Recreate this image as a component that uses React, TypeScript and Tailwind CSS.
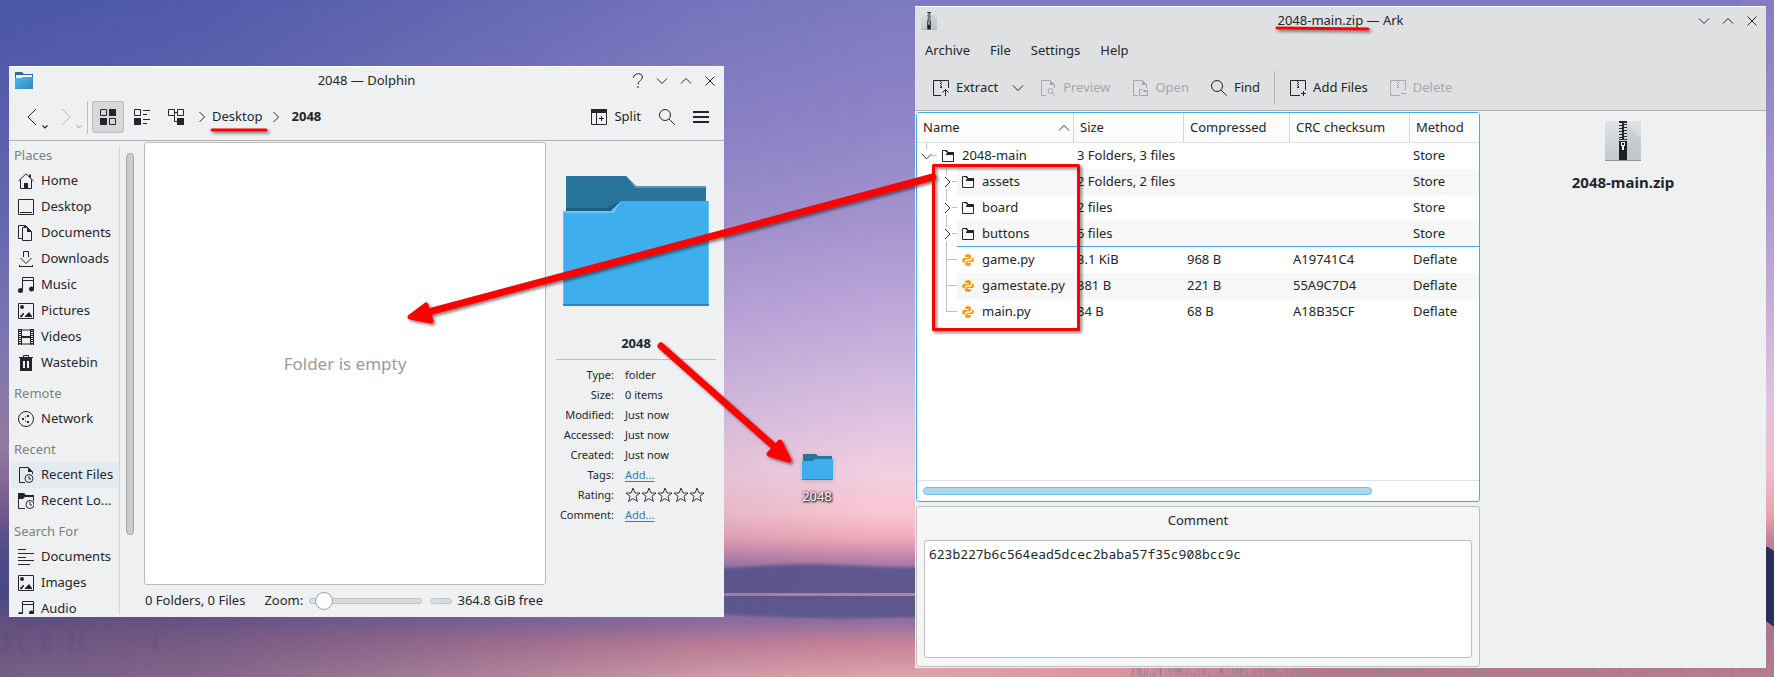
import React from "react";

type IconProps = { className?: string };

function Glyph({ className = "size-4", children }: { className?: string; children: React.ReactNode }) {
  return (
    <svg viewBox="0 0 16 16" className={`shrink-0 ${className}`} fill="none" stroke="currentColor" aria-hidden="true">
      {children}
    </svg>
  );
}

const HomeIcon = () => (
  <Glyph>
    <path d="M.5 8 8 .8 15.500 8M2.500 6.500v9h11v-9" />
    <path d="M6 10h4v5.500H6zM11 1.500h2v4l-2-2z" fill="currentColor" stroke="none" />
  </Glyph>
);
const DesktopIcon = () => (
  <Glyph>
    <path d="M.5.5h15v15H.5zM2 13.500h12" />
  </Glyph>
);
const DocumentsIcon = () => (
  <Glyph>
    <path d="M4 13.500H.5V.5H8M4.500 2.500h5l4 4v9h-9z" />
    <path d="M6 0l4 2H6zM9 2v5h5z" fill="currentColor" stroke="none" />
  </Glyph>
);
const DownloadsIcon = () => (
  <Glyph>
    <path d="M5.500 6V.5h5V6M2.500 7 8 12.500 13.500 7M1 15.500h14" />
    <path d="M1.500 14v2M14.500 14v2" />
  </Glyph>
);
const MusicIcon = () => (
  <Glyph>
    <path d="M4.500 13V.5h11V12M4.500 3.500h11" />
    <circle cx="2.500" cy="13.500" r="2.500" fill="currentColor" stroke="none" />
    <circle cx="13.500" cy="12" r="2.500" fill="currentColor" stroke="none" />
  </Glyph>
);
const PicturesIcon = () => (
  <Glyph>
    <path d="M.5.5h15v15H.5z" />
    <circle cx="4" cy="4" r="2" fill="currentColor" stroke="none" />
    <path d="M2 14v-1l3-3h1v1l-2 3zM7 14v-1l4-4 3 4v1z" fill="currentColor" stroke="none" />
  </Glyph>
);
const VideosIcon = () => (
  <Glyph>
    <path d="M.5 0v16M3.500 0v16M12.500 0v16M15.500 0v16" />
    <path d="M2 0v16M14 0v16" strokeWidth="2" strokeDasharray="1 1" />
    <path d="M0 1h16M0 15h16" strokeWidth="2" opacity=".5" />
    <path d="M4 8h8" strokeWidth="2" />
  </Glyph>
);
const WastebinIcon = () => (
  <Glyph>
    <path d="M1 2h14v1h-1v13H2V3H1zM5 6v7h2V6zM9 6v7h2V6z" fill="currentColor" fillRule="evenodd" stroke="none" />
    <path d="M5.500 2V.5h5V2" />
  </Glyph>
);
const NetworkIcon = () => (
  <Glyph>
    <circle cx="8" cy="8" r="7.500" />
    <path d="M4 7h2v2H4zM9 4h2v2H9zM9 10h2v2H9zM7 5.500h1v1H7zM7 9.500h1v1H7z" fill="currentColor" stroke="none" />
  </Glyph>
);
const RecentFilesIcon = () => (
  <Glyph>
    <path d="M7 15.500H1.500V.5H10l4.500 4.500v2" />
    <path d="M10 0v5h5z" fill="currentColor" stroke="none" />
    <circle cx="11" cy="11.500" r="4" />
    <path d="M11 9v3h2" />
  </Glyph>
);
const RecentLocationsIcon = () => (
  <Glyph>
    <path d="M7 15.500H.5v-12h15V8" />
    <path d="M0 0h6l2 2h8v2H7L5 6H0z" fill="currentColor" stroke="none" />
    <circle cx="12" cy="11.500" r="4" />
    <path d="M12 9v3h2" />
  </Glyph>
);
const TextIcon = () => (
  <Glyph>
    <path d="M0 .5h8M0 4.500h16M0 8.500h8M0 11.500h16M0 15.500h12" />
  </Glyph>
);
const GridIcon = () => (
  <Glyph>
    <path d="M.5.5h6v6h-6zM9.500 9.500h6v6h-6z" />
    <path d="M9 0h7v7H9zM0 9h7v7H0z" fill="currentColor" stroke="none" />
  </Glyph>
);
const CompactIcon = () => (
  <Glyph>
    <path d="M.5.5h6v6h-6zM9 1.500h7M9 5.500h4M9 10.500h7M9 14.500h4" />
    <path d="M0 9h7v7H0z" fill="currentColor" stroke="none" />
  </Glyph>
);
const TreeIcon = () => (
  <Glyph>
    <path d="M.5.5h6v6h-6zM9.500.5h6v6h-6zM7 3.500h2M6.500 7v5.500H9" />
    <path d="M9 9h7v7H9z" fill="currentColor" stroke="none" />
  </Glyph>
);
const SplitIcon = () => (
  <Glyph>
    <path d="M.5.5h15v15H.5zM5.500 4v12M8 9.500h5M10.500 7v5" />
    <path d="M0 0h16v4H0z" fill="currentColor" stroke="none" />
  </Glyph>
);
const SearchIcon = () => (
  <Glyph>
    <circle cx="6" cy="6" r="5.500" />
    <path d="M10 10l5.700 5.700" />
  </Glyph>
);
const MenuIcon = () => (
  <Glyph>
    <path d="M0 3h16M0 8h16M0 13h16" strokeWidth="2" />
  </Glyph>
);
const FolderIcon = () => (
  <svg viewBox="0 0 12 12" className="size-3 shrink-0" stroke="currentColor" fill="none" aria-hidden="true">
    <path d="M.5.5h4l1 2h6v9H.5z" />
    <path d="M5 2h7v3H4V4l1-1zM3 0h2l1 2H4z" fill="currentColor" stroke="none" />
  </svg>
);
const PythonIcon = () => (
  <svg viewBox="0 0 12 12" className="size-3 shrink-0" fill="#f79b1c" aria-hidden="true">
    <path d="M6 0C4 0 3 .8 3 2v1h3.500v1H2C.7 4 0 5 0 6.300 0 7.500.7 8.500 2 8.500h1V7.300C3 6 3.800 5.300 5 5.300h2.500C8.500 5.300 9 4.600 9 3.800V2C9 .7 8 0 6 0z" />
    <path d="M6 12c2 0 3-.8 3-2V9H5.500V8H10c1.300 0 2-1 2-2.300 0-1.200-.7-2.200-2-2.200v1.200C10 6 9.200 6.700 8 6.700H5.500C4.500 6.700 4 7.400 4 8.200L3 9v1c0 1.300 1 2 3 2z" />
  </svg>
);
const ArchiveFrame = ({ children, d }: { children?: React.ReactNode; d: string }) => (
  <Glyph>
    <path d={d} />
    <path d="M7.500 1v1M8.500 2v1M7.500 3v1M8.500 4v1M7.500 5v1M8.500 6v2M7.500 7v1" />
    {children}
  </Glyph>
);
const ExtractIcon = () => (
  <ArchiveFrame d="M8 15.500H.5V.5h15V8">
    <path d="M12.500 16v-6M9.500 12.500l3-3 3 3" />
  </ArchiveFrame>
);
const AddFilesIcon = () => (
  <ArchiveFrame d="M10 15.500H.5V.5h15V10">
    <path d="M11 13.500h5M13.500 11v5" />
  </ArchiveFrame>
);
const DeleteIcon = () => (
  <ArchiveFrame d="M10 15.500H.5V.5h15V10">
    <path d="M11 13.500h5" />
  </ArchiveFrame>
);
const PreviewIcon = () => (
  <Glyph>
    <path d="M6 15.500H1.500V.5H10l4.500 4.500v3" />
    <path d="M10 0v5h5z" fill="currentColor" stroke="none" />
    <circle cx="10.500" cy="11" r="2.500" />
    <path d="M12.500 13l2.500 2.500" />
  </Glyph>
);
const OpenIcon = () => (
  <Glyph>
    <path d="M6 15.500H1.500V.5H10l4.500 4.500v3M7.500 15.500v-6h3l1 1h4v5z" />
    <path d="M10 0v5h5zM7 12h4l1-1h3v1H7z" fill="currentColor" stroke="none" />
  </Glyph>
);

function Chevron({ dir, className = "size-4" }: IconProps & { dir: "left" | "right" | "up" | "down" }) {
  const d = {
    left: "M10.500 3l-5 5 5 5",
    right: "M5.500 3l5 5-5 5",
    up: "M3 10.500l5-5 5 5",
    down: "M3 5.500l5 5 5-5",
  }[dir];
  return (
    <Glyph className={className}>
      <path d={d} />
    </Glyph>
  );
}
const BackGlyph = () => (
  <Glyph>
    <path d="M12 0 4 8l8 8" />
  </Glyph>
);
const ForwardGlyph = () => (
  <Glyph>
    <path d="M4 0l8 8-8 8" />
  </Glyph>
);
const MenuMark = () => (
  <svg viewBox="0 0 6 4" className="-mb-1 ml-0.5 h-1 w-1.5" fill="none" stroke="currentColor" aria-hidden="true">
    <path d="M.5.5 3 3 5.500.5" strokeWidth="1.200" />
  </svg>
);
const CloseGlyph = () => (
  <Glyph>
    <path d="M3.500 3.500l9 9M12.500 3.500l-9 9" />
  </Glyph>
);
const HelpGlyph = () => (
  <Glyph>
    <path d="M3.500 5c0-5.500 9-5.500 9-1 0 3.500-4.500 3.500-4.500 7.500M8 13v2" />
  </Glyph>
);

function BigFolder({ className }: IconProps) {
  return (
    <svg viewBox="0 0 146 130" className={className} aria-hidden="true">
      <path d="M3 0h60l10 10h70v30H3z" fill="#29749b" />
      <path d="M63 0l9 12h71v-2H73z" fill="#5b94b3" />
      <path d="M3 32h40l14-7-9 12H3z" fill="#215d7c" />
      <path d="M0 35h48l10-10h88v105H0z" fill="#3eaeec" />
      <path d="M0 35h48l10-10-7 12H1v93H0zM145 25h1v105h-1z" fill="#6cc3f1" />
      <path d="M0 128h146v2H0z" fill="#2f86b8" />
    </svg>
  );
}

function SmallFolder({ className }: IconProps) {
  return (
    <svg viewBox="0 0 31 26" className={className} aria-hidden="true">
      <path d="M1 0h13l2 2h14v7H1z" fill="#29749b" />
      <path d="M0 7h11l2-2h18v21H0z" fill="#3eaeec" />
      <path d="M0 25h31v1H0z" fill="#2f86b8" />
    </svg>
  );
}

function TitleFolder() {
  return (
    <svg viewBox="0 0 18 17" className="h-[17px] w-[18px]" aria-hidden="true">
      <defs>
        <linearGradient id="tf" x1="0" y1="0" x2="1" y2="1">
          <stop offset="0" stopColor="#52bbee" />
          <stop offset="1" stopColor="#2c86bb" />
        </linearGradient>
      </defs>
      <path d="M0 0h7l2 2h9v8H0z" fill="#256f97" />
      <path d="M1 3h16v4H1z" fill="#f4f8fa" />
      <path d="M0 6h6l2-1h10v12H0z" fill="url(#tf)" />
    </svg>
  );
}

function ZipPicture({ className }: IconProps) {
  return (
    <svg viewBox="0 0 36 40" className={className} aria-hidden="true">
      <defs>
        <linearGradient id="zp" x1="0" y1="0" x2="0" y2="1">
          <stop offset="0" stopColor="#dfe3e5" />
          <stop offset="1" stopColor="#c3c9cc" />
        </linearGradient>
      </defs>
      <path d="M0 0h36v40H0z" fill="url(#zp)" />
      <path d="M22 3l14 14v22H22z" fill="#bcc3c7" opacity=".5" />
      <path d="M0 39h36v1H0z" fill="#90979c" />
      <path
        d="M14 0h8v2h-8zM14 4h3v1h-3zM19 3h3v1h-3zM14 7h3v1h-3zM19 6h3v1h-3zM14 10h3v1h-3zM19 9h3v1h-3zM14 13h3v1h-3zM19 12h3v1h-3zM14 16h3v1h-3zM19 15h3v1h-3zM14 18h8v1h-8z"
        fill="#26292b"
      />
      <path d="M17 2h2v17h-2z" fill="#26292b" />
      <path d="M14 20h8v19h-8z" fill="#1d1f20" />
      <path d="M16 21h4v4h-1v4h-2v-4h-1z" fill="#f2f4f5" />
      <path d="M17 22h2v2h-2z" fill="#1d1f20" />
    </svg>
  );
}

function Wallpaper() {
  return (
    <svg className="absolute inset-0 h-full w-full" viewBox="0 0 1774 677" preserveAspectRatio="none" aria-hidden="true">
      <defs>
        <linearGradient id="sky" x1="0" y1="0" x2="0" y2="677" gradientUnits="userSpaceOnUse">
          <stop offset="0" stopColor="#7d79c0" />
          <stop offset=".18" stopColor="#8f85c7" />
          <stop offset=".32" stopColor="#a393cd" />
          <stop offset=".46" stopColor="#bfa7d9" />
          <stop offset=".59" stopColor="#d8bfe1" />
          <stop offset=".7" stopColor="#f3cfe1" />
          <stop offset=".76" stopColor="#f9c6d0" />
          <stop offset=".795" stopColor="#f0abb8" />
          <stop offset=".82" stopColor="#c888ac" />
          <stop offset=".845" stopColor="#8f70a4" />
          <stop offset=".92" stopColor="#9371a2" />
          <stop offset=".95" stopColor="#c68199" />
          <stop offset="1" stopColor="#dea4ac" />
        </linearGradient>
        <linearGradient id="dusk" x1="0" y1="0" x2="0" y2="677" gradientUnits="userSpaceOnUse">
          <stop offset="0" stopColor="#4a56a6" />
          <stop offset=".3" stopColor="#6164af" />
          <stop offset=".48" stopColor="#7874b2" />
          <stop offset=".66" stopColor="#93799f" />
          <stop offset=".76" stopColor="#70568c" />
          <stop offset=".82" stopColor="#4a4a86" />
          <stop offset=".88" stopColor="#474984" />
          <stop offset=".93" stopColor="#65517f" />
          <stop offset="1" stopColor="#755d84" />
        </linearGradient>
        <linearGradient id="fade" x1="0" y1="0" x2="1000" y2="0" gradientUnits="userSpaceOnUse">
          <stop offset="0" stopColor="#fff" />
          <stop offset=".2" stopColor="#ddd" />
          <stop offset=".5" stopColor="#777" />
          <stop offset=".72" stopColor="#222" />
          <stop offset=".88" stopColor="#000" />
        </linearGradient>
        <mask id="leftMask">
          <rect width="1000" height="677" fill="url(#fade)" />
        </mask>
        <linearGradient id="east" x1="0" y1="0" x2="0" y2="677" gradientUnits="userSpaceOnUse">
          <stop offset="0" stopColor="#847cc2" />
          <stop offset=".3" stopColor="#ad97d2" />
          <stop offset=".58" stopColor="#e0c0e0" />
          <stop offset=".7" stopColor="#efbac8" />
          <stop offset=".76" stopColor="#e8a3ab" />
          <stop offset=".8" stopColor="#c07f9c" />
          <stop offset=".92" stopColor="#b27092" />
          <stop offset="1" stopColor="#c27a8a" />
        </linearGradient>
        <linearGradient id="shore" x1="900" y1="0" x2="1774" y2="0" gradientUnits="userSpaceOnUse">
          <stop offset="0" stopColor="#dea4ac" />
          <stop offset=".25" stopColor="#d8949f" />
          <stop offset=".5" stopColor="#b97584" />
          <stop offset="1" stopColor="#c27a8a" />
        </linearGradient>
        <filter id="grass" x="0" y="0" width="100%" height="100%">
          <feTurbulence type="fractalNoise" baseFrequency=".35 .04" numOctaves="3" seed="7" />
          <feColorMatrix values="0 0 0 0 .3  0 0 0 0 .22  0 0 0 0 .28  2.600 0 0 0 -1" />
        </filter>
        <filter id="soft" x="-5%" y="-20%" width="110%" height="140%">
          <feGaussianBlur stdDeviation="1.500" />
        </filter>
      </defs>
      <rect width="1774" height="677" fill="url(#sky)" />
      <g filter="url(#soft)">
        <path d="M560 566c100 8 160 2 220-1 60-2 100 4 150 2v50c-50 1-80 2-130 1-60-2-110-8-240-2z" fill="#5e588f" />
      </g>
      <path d="M620 593h300v3H620z" fill="#a986ad" />
      <rect width="1000" height="677" fill="url(#dusk)" mask="url(#leftMask)" />
      <rect x="915" y="660" width="859" height="17" fill="url(#shore)" />
      <rect x="1740" width="34" height="677" fill="url(#east)" />
      <path d="M1740 546l28 1 6 4v76l-8-6-26 2z" fill="#272f5c" />
      <rect x="1130" y="630" width="644" height="47" filter="url(#grass)" />
      <g stroke="#4b3a63" opacity=".25" fill="none" filter="url(#soft)">
        <path
          d="M5 632q4 14 0 22M22 636q-4 10 1 18M40 634q6 10 1 18M48 634q-4 12 1 18M72 632q0 14-3 22M84 632q-6 12 0 18M157 632q-6 8 0 18"
          strokeWidth="2"
        />
      </g>
    </svg>
  );
}

function PlaceItem({ icon, label, active }: { icon: React.ReactNode; label: string; active?: boolean }) {
  return (
    <li>
      <a
        href="#"
        className={`flex h-[26px] items-center gap-[7px] whitespace-nowrap pl-[7px] ${active ? "bg-[#e3ebf1]" : ""}`}
      >
        {icon}
        {label}
      </a>
    </li>
  );
}

const places: { title: string; items: [string, () => React.JSX.Element][] }[] = [
  {
    title: "Places",
    items: [
      ["Home", HomeIcon],
      ["Desktop", DesktopIcon],
      ["Documents", DocumentsIcon],
      ["Downloads", DownloadsIcon],
      ["Music", MusicIcon],
      ["Pictures", PicturesIcon],
      ["Videos", VideosIcon],
      ["Wastebin", WastebinIcon],
    ],
  },
  { title: "Remote", items: [["Network", NetworkIcon]] },
  {
    title: "Recent",
    items: [
      ["Recent Files", RecentFilesIcon],
      ["Recent Lo...", RecentLocationsIcon],
    ],
  },
  {
    title: "Search For",
    items: [
      ["Documents", TextIcon],
      ["Images", PicturesIcon],
      ["Audio", MusicIcon],
    ],
  },
];

function Star() {
  return (
    <svg viewBox="0 0 16 16" className="size-4" fill="none" stroke="#31363b" aria-hidden="true">
      <path d="M8 1l1.800 4.900 5.200.2-4.100 3.200 1.500 5.100L8 11.500l-4.400 2.900 1.500-5.100L1 6.100l5.200-.2z" />
    </svg>
  );
}

function InfoRow({ label, children }: { label: string; children: React.ReactNode }) {
  return (
    <>
      <dt className="text-right">{label}</dt>
      <dd>{children}</dd>
    </>
  );
}

function DolphinWindow() {
  return (
    <section
      aria-label="Dolphin"
      className="absolute left-[9px] top-[66px] flex h-[551px] w-[715px] flex-col overflow-hidden border-t border-white bg-[#eff0f1]"
    >
      <header className="grid h-[27px] grid-cols-[1fr_auto_1fr] items-center px-[6px]">
        <TitleFolder />
        <h1 className="text-[13px]">2048 — Dolphin</h1>
        <div className="flex justify-end gap-2">
          <button aria-label="Help">
            <HelpGlyph />
          </button>
          <button aria-label="Minimize">
            <Chevron dir="down" />
          </button>
          <button aria-label="Maximize">
            <Chevron dir="up" />
          </button>
          <button aria-label="Close">
            <CloseGlyph />
          </button>
        </div>
      </header>

      <div className="flex h-[47px] shrink-0 items-center border-b border-[#adb0b2] pl-[15px] pr-[15px]">
        <button aria-label="Back" className="flex items-end">
          <BackGlyph />
          <MenuMark />
        </button>
        <button aria-label="Forward" disabled className="ml-[10px] flex items-end text-[#b9bbbd]">
          <ForwardGlyph />
          <MenuMark />
        </button>
        <span className="ml-[5px] h-[33px] w-px bg-[#bcbebf]" />
        <button
          aria-label="Icons view"
          className="ml-1 flex size-8 items-center justify-center rounded-[3px] border border-[#b7b9bb] bg-[#d6d7d9]"
        >
          <GridIcon />
        </button>
        <button aria-label="Compact view" className="ml-[10px]">
          <CompactIcon />
        </button>
        <button aria-label="Tree view" className="ml-[18px]">
          <TreeIcon />
        </button>
        <nav aria-label="Location" className="ml-[10px] flex items-center text-[13px]">
          <Chevron dir="right" />
          <a href="#" className="ml-0.5">
            Desktop
          </a>
          <Chevron dir="right" className="ml-[5px] size-4" />
          <a href="#" className="ml-2 font-bold">
            2048
          </a>
        </nav>
        <button className="ml-auto flex items-center gap-[7px] text-[13px]">
          <SplitIcon />
          Split
        </button>
        <button aria-label="Search" className="ml-[18px]">
          <SearchIcon />
        </button>
        <button aria-label="Menu" className="ml-[18px]">
          <MenuIcon />
        </button>
      </div>

      <div className="flex min-h-0 flex-1">
        <nav aria-label="Places" className="flex w-[135px] shrink-0 overflow-hidden pl-0.5">
          <div className="mb-[3px] w-[108px] overflow-hidden pt-px text-[13px]">
            {places.map((group) => (
              <section key={group.title} className="mb-1">
                <h2 className="h-[26px] pl-[3px] leading-[26px] text-[#7c7f82]">{group.title}</h2>
                <ul>
                  {group.items.map(([label, Icon]) => (
                    <PlaceItem key={label} icon={<Icon />} label={label} active={label === "Recent Files"} />
                  ))}
                </ul>
              </section>
            ))}
          </div>
          <div className="mb-[3px] mt-[6px] flex-1 border-l border-[#d3d5d6] pl-[6px] pt-[6px]">
            <div className="h-[382px] w-2 rounded-full border border-[#a3a4a5] bg-[#cacbcb]" />
          </div>
        </nav>

        <main className="flex min-w-0 flex-1 flex-col pt-px">
          <div className="flex flex-1 items-center justify-center rounded-[3px] border border-[#b8babc] bg-white text-[17px] text-[#9a9b9d]">
            Folder is empty
          </div>
          <div className="flex h-8 items-center whitespace-nowrap pl-px text-[13px]">
            <span>0 Folders, 0 Files</span>
            <label htmlFor="zoom" className="ml-[19px]">
              Zoom:
            </label>
            <input
              id="zoom"
              type="range"
              min={0}
              max={20}
              defaultValue={1}
              className="ml-[6px] h-[18px] min-w-0 flex-1 appearance-none bg-transparent [&::-webkit-slider-runnable-track]:h-[6px] [&::-webkit-slider-runnable-track]:rounded-full [&::-webkit-slider-runnable-track]:border [&::-webkit-slider-runnable-track]:border-[#bfc1c2] [&::-webkit-slider-runnable-track]:bg-[#dadcdc] [&::-webkit-slider-runnable-track]:bg-[linear-gradient(90deg,#cbe3f3_10px,#dadcdc_10px)] [&::-webkit-slider-thumb]:-mt-[7px] [&::-webkit-slider-thumb]:size-[18px] [&::-webkit-slider-thumb]:appearance-none [&::-webkit-slider-thumb]:rounded-full [&::-webkit-slider-thumb]:border [&::-webkit-slider-thumb]:border-[#9fa1a2] [&::-webkit-slider-thumb]:bg-[#fcfcfc]"
            />
            <span className="ml-2 flex h-[6px] w-[22px] overflow-hidden rounded-full border border-[#bfc1c2] bg-[#dadcdc]">
              <span className="w-1 bg-[#cbe3f3]" />
            </span>
            <span className="ml-[5px] mr-[3px]">364.8 GiB free</span>
          </div>
        </main>

        <aside className="flex w-[178px] shrink-0 flex-col items-center pl-[10px] pr-2">
          <BigFolder className="mt-[35px] h-[130px] w-[146px]" />
          <h2 className="mt-[27px] text-[13px] font-bold leading-5">2048</h2>
          <hr className="mt-[6px] w-full border-[#bcbebf]" />
          <dl className="mt-[5px] grid w-full grid-cols-[58px_1fr] gap-x-[11px] text-[11px] leading-5">
            <InfoRow label="Type:">folder</InfoRow>
            <InfoRow label="Size:">0 items</InfoRow>
            <InfoRow label="Modified:">Just now</InfoRow>
            <InfoRow label="Accessed:">Just now</InfoRow>
            <InfoRow label="Created:">Just now</InfoRow>
            <InfoRow label="Tags:">
              <a href="#" className="text-[#2980b9] underline underline-offset-2">
                Add...
              </a>
            </InfoRow>
            <InfoRow label="Rating:">
              <span className="flex h-5 items-center" role="img" aria-label="No rating">
                <Star />
                <Star />
                <Star />
                <Star />
                <Star />
              </span>
            </InfoRow>
            <InfoRow label="Comment:">
              <a href="#" className="text-[#2980b9] underline underline-offset-2">
                Add...
              </a>
            </InfoRow>
          </dl>
        </aside>
      </div>
    </section>
  );
}

function TreeLines({ kind }: { kind: "root" | "branch" | "leaf" | "last" }) {
  if (kind === "root") {
    return (
      <svg className="h-[26px] w-5 shrink-0" viewBox="0 0 20 26" fill="none" aria-hidden="true">
        <path d="M9.500 0v6M15 12.500h5" stroke="#bdbfc0" />
        <path d="M5 11l4.500 5 5-5" stroke="#31363b" />
      </svg>
    );
  }
  return (
    <svg className="ml-5 h-[26px] w-5 shrink-0" viewBox="0 0 20 26" fill="none" aria-hidden="true">
      {kind === "branch" && <path d="M9.500 0v6M9.500 20v6M15 12.500h5" stroke="#bdbfc0" />}
      {kind === "leaf" && <path d="M9.500 0v26M10 12.500h10" stroke="#bdbfc0" />}
      {kind === "last" && <path d="M9.500 0v12.500H20" stroke="#bdbfc0" />}
      {kind === "branch" && <path d="M8 8l5 5-5 5" stroke="#31363b" />}
    </svg>
  );
}

type Row = {
  name: string;
  kind: "root" | "branch" | "leaf" | "last";
  size: string;
  compressed?: string;
  crc?: string;
  method: string;
};

const rows: Row[] = [
  { name: "2048-main", kind: "root", size: "3 Folders, 3 files", method: "Store" },
  { name: "assets", kind: "branch", size: "2 Folders, 2 files", method: "Store" },
  { name: "board", kind: "branch", size: "2 files", method: "Store" },
  { name: "buttons", kind: "branch", size: "5 files", method: "Store" },
  { name: "game.py", kind: "leaf", size: "3.1 KiB", compressed: "968 B", crc: "A19741C4", method: "Deflate" },
  { name: "gamestate.py", kind: "leaf", size: "381 B", compressed: "221 B", crc: "55A9C7D4", method: "Deflate" },
  { name: "main.py", kind: "last", size: "84 B", compressed: "68 B", crc: "A18B35CF", method: "Deflate" },
];

function ToolButton({
  icon,
  label,
  disabled,
  className = "",
}: {
  icon: React.ReactNode;
  label: string;
  disabled?: boolean;
  className?: string;
}) {
  return (
    <button
      disabled={disabled}
      className={`flex items-center gap-[7px] whitespace-nowrap ${disabled ? "text-[#a5a8aa]" : ""} ${className}`}
    >
      {icon}
      {label}
    </button>
  );
}

function ArkWindow() {
  const headCell = "pl-[6px] py-0 text-left font-normal shadow-[inset_-1px_0_0_#d5d6d7,inset_0_-1px_0_#e0e1e2]";
  return (
    <section
      aria-label="Ark"
      className="absolute left-[915px] top-[6px] flex h-[662px] w-[851px] flex-col overflow-hidden border-t border-white bg-[#eff0f1] text-[13px]"
    >
      <div className="h-[104px] shrink-0 border-b border-[#adb0b2] bg-[#dee0e2]">
        <header className="grid h-[27px] grid-cols-[1fr_auto_1fr] items-center px-[6px]">
          <ZipPicture className="h-[18px] w-4" />
          <h1>2048-main.zip — Ark</h1>
          <div className="flex justify-end gap-2">
            <button aria-label="Minimize">
              <Chevron dir="down" />
            </button>
            <button aria-label="Maximize">
              <Chevron dir="up" />
            </button>
            <button aria-label="Close">
              <CloseGlyph />
            </button>
          </div>
        </header>
        <nav aria-label="Menu bar" className="flex h-[33px] items-center gap-5 pl-[10px]">
          <button>Archive</button>
          <button>File</button>
          <button>Settings</button>
          <button>Help</button>
        </nav>
        <div role="toolbar" className="flex h-[42px] items-center pl-[18px]">
          <ToolButton icon={<ExtractIcon />} label="Extract" />
          <button aria-label="Extract options" className="ml-3">
            <Chevron dir="down" />
          </button>
          <ToolButton icon={<PreviewIcon />} label="Preview" disabled className="ml-[14px]" />
          <ToolButton icon={<OpenIcon />} label="Open" disabled className="ml-[22px]" />
          <ToolButton icon={<SearchIcon />} label="Find" className="ml-[22px]" />
          <span className="ml-[14px] h-[34px] w-px bg-[#b3b5b7]" />
          <ToolButton icon={<AddFilesIcon />} label="Add Files" className="ml-[15px]" />
          <ToolButton icon={<DeleteIcon />} label="Delete" disabled className="ml-[22px]" />
        </div>
      </div>

      <div className="flex min-h-0 flex-1">
        <div className="flex w-[565px] shrink-0 flex-col gap-1 py-px pl-px">
          <div className="flex flex-1 flex-col rounded-[3px] border border-[#3daee9] bg-white">
            <div className="flex-1 overflow-hidden border-b border-[#e3e4e5]">
              <table className="w-full table-fixed border-collapse">
                <colgroup>
                  <col className="w-[157px]" />
                  <col className="w-[110px]" />
                  <col className="w-[106px]" />
                  <col className="w-[120px]" />
                  <col />
                </colgroup>
                <thead>
                  <tr className="h-[30px] bg-[#fcfcfc]">
                    <th scope="col" className={headCell}>
                      <span className="flex items-center justify-between pr-[2px]">
                        Name
                        <Chevron dir="up" />
                      </span>
                    </th>
                    <th scope="col" className={headCell}>
                      Size
                    </th>
                    <th scope="col" className={headCell}>
                      Compressed
                    </th>
                    <th scope="col" className={headCell}>
                      CRC checksum
                    </th>
                    <th scope="col" className="py-0 pl-[6px] text-left font-normal shadow-[inset_0_-1px_0_#e0e1e2]">
                      Method
                    </th>
                  </tr>
                </thead>
                <tbody>
                  {rows.map((row, i) => {
                    const shade = i % 2 === 1 ? "bg-[#f7f7f7]" : "";
                    const line = row.name === "buttons" ? "shadow-[inset_0_-1px_0_#3daee9]" : "";
                    return (
                      <tr key={row.name} className="h-[26px]">
                        <td className="p-0">
                          <div className="flex h-[26px]">
                            <TreeLines kind={row.kind} />
                            <div className={`flex flex-1 items-center gap-2 pl-[5px] ${shade} ${line}`}>
                              {row.name.endsWith(".py") ? <PythonIcon /> : <FolderIcon />}
                              {row.name}
                            </div>
                          </div>
                        </td>
                        <td className={`py-0 pl-[3px] ${shade} ${line}`}>{row.size}</td>
                        <td className={`py-0 pl-[3px] ${shade} ${line}`}>{row.compressed}</td>
                        <td className={`py-0 pl-[3px] ${shade} ${line}`}>{row.crc}</td>
                        <td className={`py-0 pl-[3px] ${shade} ${line}`}>{row.method}</td>
                      </tr>
                    );
                  })}
                </tbody>
              </table>
            </div>
            <div className="flex h-5 items-center px-[6px]">
              <div className="h-2 w-[449px] rounded-full border border-[#6dbfea] bg-[#aed8f0]" />
            </div>
          </div>

          <div className="flex h-[161px] flex-col rounded-[3px] border border-[#bcbebf] bg-[#f4f5f5] px-[7px] pb-2">
            <label htmlFor="comment" className="h-[33px] text-center leading-[26px]">
              Comment
            </label>
            <textarea
              id="comment"
              readOnly
              defaultValue="623b227b6c564ead5dcec2baba57f35c908bcc9c"
              className="w-full flex-1 resize-none rounded-[3px] border border-[#bcbebf] bg-white px-1 py-[3px] font-['Noto_Sans_Mono','DejaVu_Sans_Mono',monospace] text-[13px] leading-5 outline-none"
            />
          </div>
        </div>

        <aside className="flex min-w-0 flex-1 flex-col items-center">
          <ZipPicture className="mt-[10px] h-10 w-9" />
          <h2 className="mt-[10px] text-[15px] font-bold leading-[22px]">2048-main.zip</h2>
        </aside>
      </div>
    </section>
  );
}

function Annotations() {
  return (
    <svg
      className="pointer-events-none absolute left-0 top-0 h-[677px] w-[1774px]"
      viewBox="0 0 1774 677"
      fill="none"
      stroke="#fe0000"
      strokeLinecap="round"
      strokeLinejoin="round"
      aria-hidden="true"
    >
      <defs>
        <filter id="drop" x="0" y="0" width="1774" height="677" filterUnits="userSpaceOnUse">
          <feDropShadow dx="2" dy="2" stdDeviation="1.500" floodColor="#000" floodOpacity=".5" />
        </filter>
      </defs>
      <g filter="url(#drop)">
        <path d="M933 177 425 313" strokeWidth="7" />
        <path d="M410 317l16-12 5 16z" strokeWidth="5" fill="#fe0000" />
        <path d="M661 346 778 450" strokeWidth="7" />
        <path d="M789 460l-9-18-11 12z" strokeWidth="5" fill="#fe0000" />
        <rect x="933.500" y="165.500" width="145" height="164" strokeWidth="3" />
        <path d="M212 130h54" strokeWidth="3" />
        <path d="M1277 28l91 1" strokeWidth="3" />
      </g>
    </svg>
  );
}

export default function App() {
  return (
    <div className="relative min-h-screen w-full overflow-hidden bg-[#7d79c0] font-['Noto_Sans',sans-serif] text-[13px] text-[#232629]">
      <Wallpaper />
      <DolphinWindow />
      <a
        href="#"
        className="absolute left-[787px] top-[454px] flex w-[60px] flex-col items-center text-[13px] text-white [text-shadow:1px_1px_2px_#000,0_0_3px_#000]"
      >
        <SmallFolder className="h-[26px] w-[31px] drop-shadow-sm" />
        <span className="mt-[6px] leading-5">2048</span>
      </a>
      <ArkWindow />
      <Annotations />
    </div>
  );
}
